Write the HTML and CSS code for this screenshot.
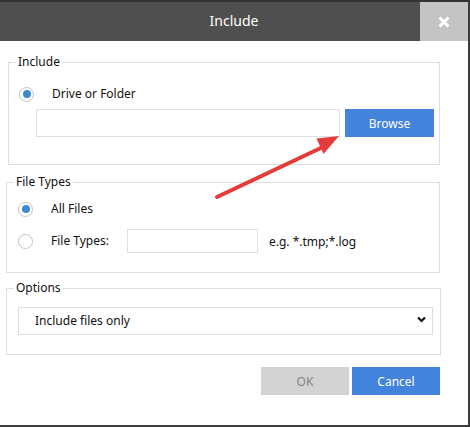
FILE: index.html
```html
<!DOCTYPE html>
<html>
<head>
<meta charset="utf-8">
<link rel="stylesheet" href="styles.css">
</head>
<body>
<div class="window">
  <div class="titlebar">
    <div class="spacer"></div>
    <div class="title">Include</div>
    <div class="close">
      <svg width="14" height="14" viewBox="0 0 14 14"><path d="M2.5 2.5 L11.5 11.5 M11.5 2.5 L2.5 11.5" stroke="#fff" stroke-width="3" stroke-linecap="butt"/></svg>
    </div>
  </div>
  <div class="content">
    <fieldset class="group g-include">
      <legend>Include</legend>
      <div class="row r-drive">
        <span class="radio checked"></span>
        <span class="label">Drive or Folder</span>
      </div>
      <div class="row r-path">
        <div class="input path"></div>
        <div class="btn blue browse">Browse</div>
      </div>
    </fieldset>
    <fieldset class="group g-types">
      <legend>File Types</legend>
      <div class="row r-all">
        <span class="radio checked"></span>
        <span class="label">All Files</span>
      </div>
      <div class="row r-ft">
        <span class="radio"></span>
        <span class="label ftlabel">File Types:</span>
        <div class="input ft"></div>
        <span class="hint">e.g. *.tmp;*.log</span>
      </div>
    </fieldset>
    <fieldset class="group g-options">
      <legend>Options</legend>
      <div class="select">
        <span>Include files only</span>
        <svg class="chev" width="9" height="7" viewBox="0 0 9 7"><path d="M1 1.5 L4.5 5 L8 1.5" fill="none" stroke="#111" stroke-width="2.2"/></svg>
      </div>
    </fieldset>
    <div class="actions">
      <div class="btn gray">OK</div>
      <div class="btn blue">Cancel</div>
    </div>
  </div>
  <svg class="arrow" width="470" height="427" viewBox="0 0 470 427">
    <line x1="217" y1="197" x2="325" y2="146" stroke="#e53b3b" stroke-width="4" stroke-linecap="round"/>
    <polygon points="339,136 316.5,138.5 323.5,154" fill="#e53b3b"/>
  </svg>
</div>
</body>
</html>
```
FILE: styles.css
```css
* { box-sizing: border-box; }
html, body { margin: 0; padding: 0; }
body {
  width: 470px;
  height: 427px;
  background: #fff;
  font-family: "Noto Sans", "Open Sans", sans-serif;
  font-size: 12px;
  color: #111;
  overflow: hidden;
}
.window {
  position: relative;
  width: 470px;
  height: 427px;
  border-top: 2px solid #333;
  border-right: 2px solid #3c3c3c;
  border-bottom: 2px solid #3c3c3c;
  background: #fff;
  display: flex;
  flex-direction: column;
}
.titlebar {
  height: 39px;
  background: #4f4f4f;
  display: grid;
  grid-template-columns: 48px 1fr 48px;
  align-items: stretch;
}
.title {
  color: #fff;
  font-size: 14px;
  display: flex;
  align-items: center;
  justify-content: center;
  padding-bottom: 2px;
}
.close {
  background: #c4c4c4;
  display: flex;
  align-items: center;
  justify-content: center;
}
.content {
  padding-left: 6px;
  display: flex;
  flex-direction: column;
}
.group {
  margin: 0;
  padding: 0;
  border: 1px solid #dedede;
  min-inline-size: 0;
}
.group legend {
  font-size: 12px;
  line-height: 16px;
  padding: 0 2px;
  margin-left: 7px;
  color: #111;
}
.g-include {
  margin-top: 13px;
  margin-left: 2px;
  width: 432px;
  height: 111px;
}
.g-types {
  margin-top: 9px;
  width: 434px;
  height: 99px;
}
.g-options {
  margin-top: 7px;
  width: 435px;
  height: 75px;
}
.row {
  display: flex;
  align-items: center;
}
.radio {
  width: 15px;
  height: 15px;
  border-radius: 50%;
  border: 1.5px solid #c3c3c3;
  display: flex;
  align-items: center;
  justify-content: center;
  flex: none;
}
.radio.checked::after {
  content: "";
  width: 8px;
  height: 8px;
  border-radius: 50%;
  background: #3f89d1;
}
.label { line-height: 16px; }
.r-drive {
  margin-top: 16px;
  padding-left: 10px;
  height: 16px;
}
.r-drive .label, .r-all .label, .r-ft .label { margin-left: 18px; }
.ftlabel { width: 76px; flex: none; }
.r-path {
  margin-top: 7px;
  padding-left: 27px;
}
.input {
  border: 1px solid #e0e0e0;
  background: #fff;
}
.path { width: 304px; height: 28px; }
.btn {
  height: 28px;
  width: 88px;
  display: flex;
  align-items: center;
  justify-content: center;
  font-size: 12px;
}
.browse { margin-left: 5px; width: 89px; }
.blue { background: #4383dc; color: #fff; }
.gray { background: #d3d3d3; color: #858585; }
.r-all {
  margin-top: 11px;
  padding-left: 11px;
  height: 16px;
}
.r-ft {
  margin-top: 12px;
  padding-left: 11px;
  height: 24px;
}
.ft { width: 131px; height: 24px; }
.hint { margin-left: 11px; }
.select {
  margin: 11px 0 0 11px;
  width: 415px;
  height: 28px;
  border: 1px solid #dedede;
  display: flex;
  align-items: center;
  justify-content: space-between;
  padding: 0 6px 1px 16px;
}
.chev { margin-top: -2px; }
.actions {
  display: flex;
  justify-content: flex-end;
  gap: 3px;
  margin-top: 12px;
  width: 434px;
}
.arrow {
  position: absolute;
  left: 0;
  top: -2px;
  pointer-events: none;
}
```
